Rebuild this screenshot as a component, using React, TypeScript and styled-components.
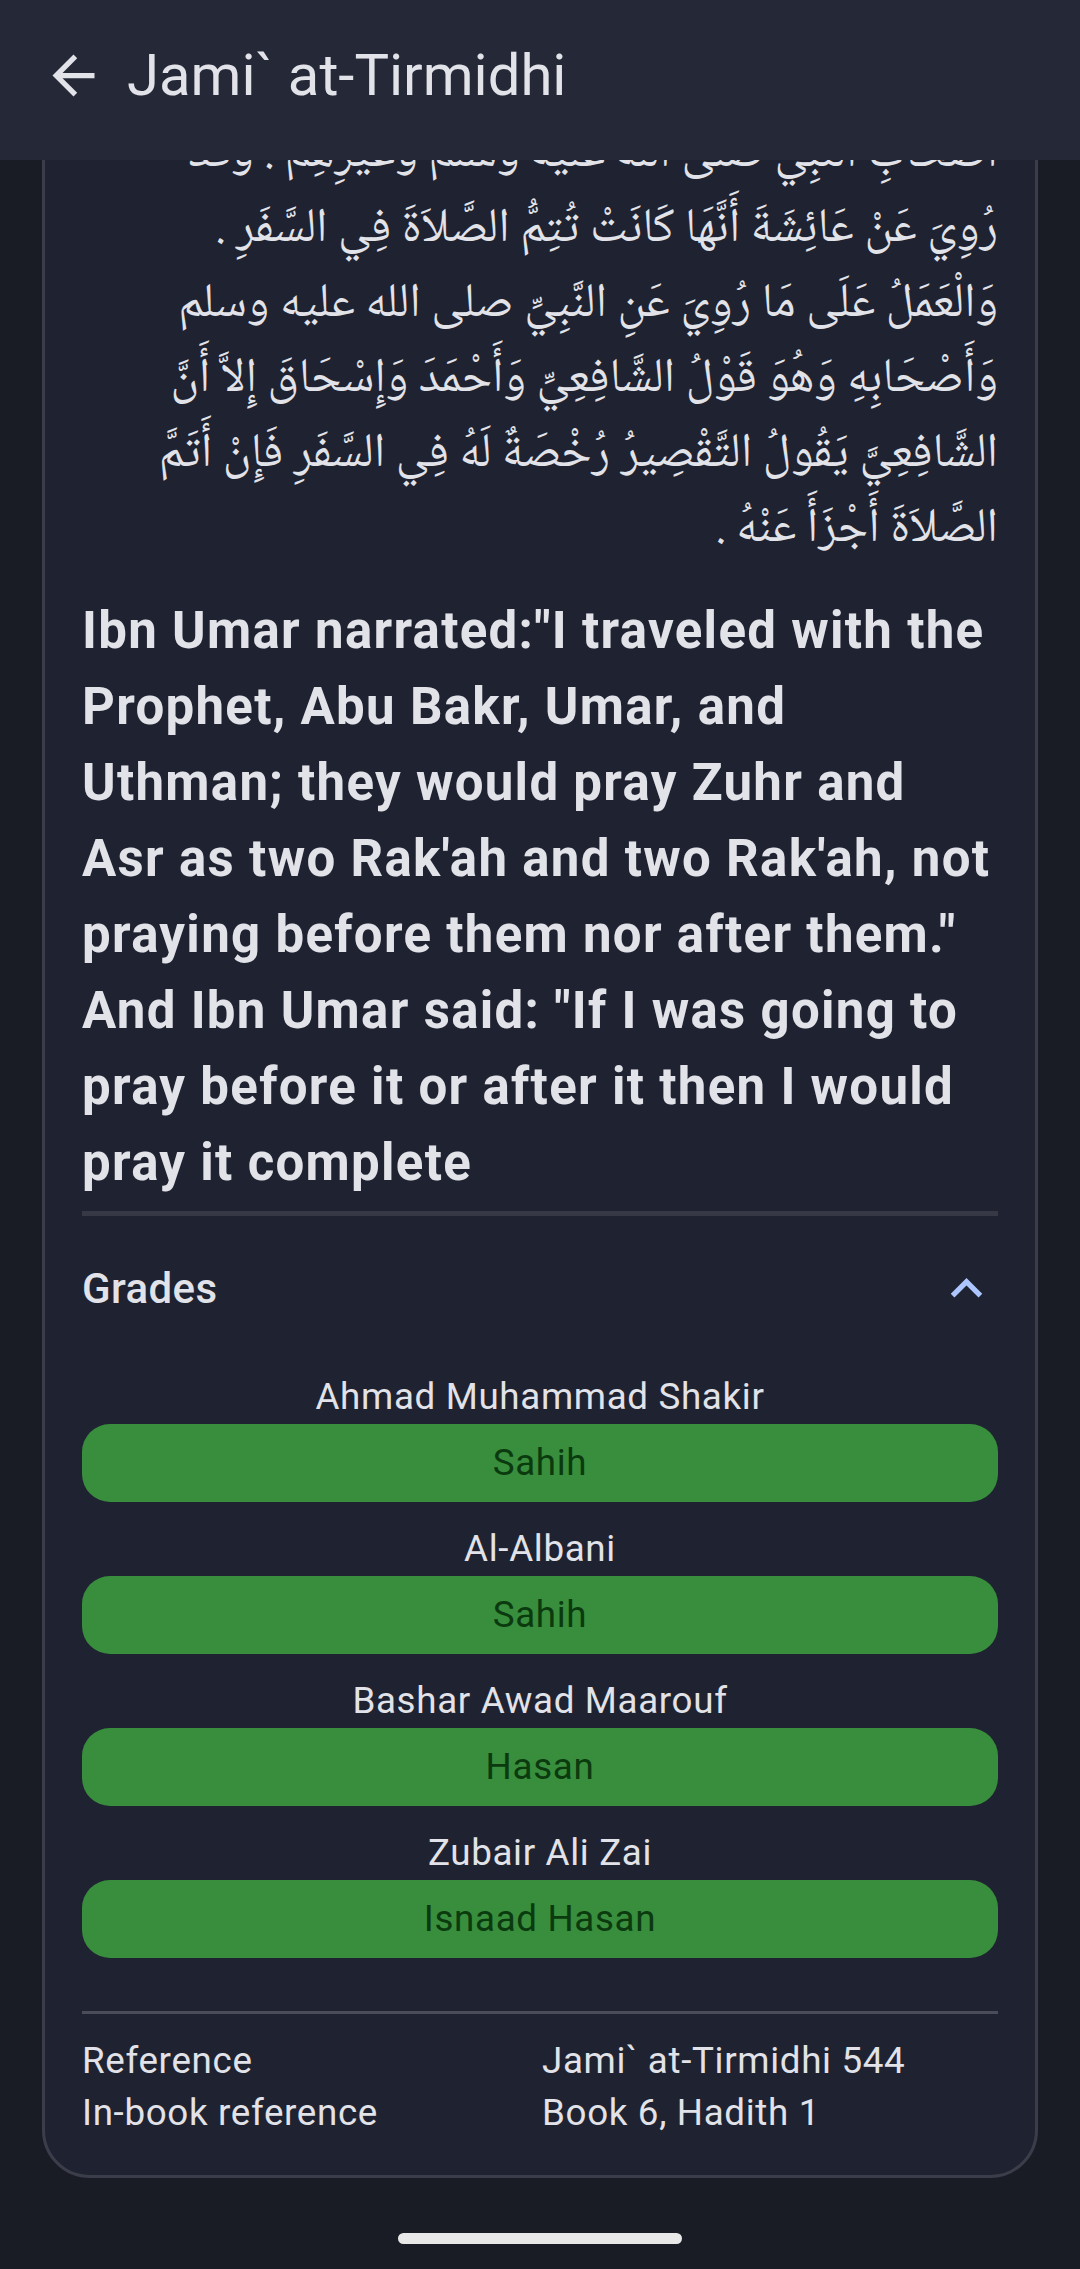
import React from "react";
import styled, { createGlobalStyle } from "styled-components";

const GlobalStyle = createGlobalStyle`
  html, body {
    margin: 0;
    padding: 0;
    background: #1a1c25;
  }
  body {
    font-family: Roboto, "Noto Sans", "DejaVu Sans", sans-serif;
    color: #e2e2e9;
    -webkit-font-smoothing: antialiased;
  }
  * { box-sizing: border-box; }
`;

const Screen = styled.div`
  position: relative;
  width: 1080px;
  height: 2269px;
  overflow: hidden;
  display: flex;
  flex-direction: column;
  background: #1a1c25;
`;

const TopBar = styled.header`
  position: absolute;
  top: 0;
  left: 0;
  right: 0;
  height: 160px;
  z-index: 5;
  display: flex;
  align-items: center;
  padding: 0 0 10px 10px;
  background: #252837;
`;

const IconButton = styled.button`
  width: 126px;
  height: 126px;
  display: flex;
  align-items: center;
  justify-content: center;
  background: none;
  border: none;
  padding: 0;
  margin-right: -9px;
  color: #e2e2e9;
`;

const Title = styled.h1`
  margin: 0;
  font-family: Roboto, sans-serif;
  font-weight: 400;
  font-size: 58px;
  line-height: 76px;
  color: #e2e2e9;
  letter-spacing: 0;
`;

const Card = styled.article`
  margin: 0 42px;
  padding: 115px 37px 35px;
  background: #1f2230;
  border: 3px solid #3b3e4a;
  border-radius: 0 0 48px 48px;
  display: flex;
  flex-direction: column;
`;

const ArabicText = styled.p`
  margin: 0;
  direction: rtl;
  text-align: right;
  font-family: "Noto Naskh Arabic", "Noto Sans Arabic", "DejaVu Sans", serif;
  font-size: 48px;
  line-height: 75px;
  color: #e2e2e9;
  white-space: nowrap;
`;

const EnglishText = styled.p`
  margin: 25px 0 0;
  font-family: Roboto, sans-serif;
  font-weight: 700;
  font-size: 51px;
  line-height: 76px;
  letter-spacing: 1.3px;
  color: #e2e2e9;
  white-space: nowrap;
`;

const Divider = styled.hr<{ $thick?: boolean; $gap: number }>`
  margin: ${(p) => p.$gap}px 0 0;
  border: none;
  height: ${(p) => (p.$thick ? 5 : 3)}px;
  background: ${(p) => (p.$thick ? "#363945" : "#4a4d59")};
`;

const GradesHeader = styled.div`
  height: 144px;
  display: flex;
  align-items: center;
  justify-content: space-between;
`;

const GradesTitle = styled.span`
  font-family: Roboto, sans-serif;
  font-weight: 500;
  font-size: 42px;
  letter-spacing: 0.4px;
  color: #e2e2e9;
`;

const Chevron = styled.svg`
  width: 63px;
  height: 63px;
  display: block;
`;

const GradeList = styled.div`
  display: flex;
  flex-direction: column;
  gap: 21.5px;
  margin-top: 11px;
`;

const GradeItem = styled.div`
  display: flex;
  flex-direction: column;
`;

const Grader = styled.div`
  text-align: center;
  font-size: 36.75px;
  line-height: 52.5px;
  letter-spacing: 0.66px;
  color: #e2e2e9;
`;

const Badge = styled.div`
  height: 78px;
  border-radius: 28px;
  background: #388e3c;
  display: flex;
  align-items: center;
  justify-content: center;
  font-size: 36.75px;
  letter-spacing: 0.66px;
  color: #0b3a0f;
`;

const RefTable = styled.div`
  margin-top: 21px;
  display: grid;
  grid-template-columns: 1fr 1fr;
  font-size: 36.75px;
  line-height: 52.5px;
  letter-spacing: 0.66px;
  color: #e2e2e9;
`;

const RefCell = styled.div<{ $value?: boolean }>`
  padding-left: ${(p) => (p.$value ? 2 : 0)}px;
`;

const NavArea = styled.div`
  flex: 1;
  display: flex;
  justify-content: center;
  padding-top: 55px;
`;

const Handle = styled.div`
  width: 284px;
  height: 11px;
  border-radius: 6px;
  background: #e8e8e8;
`;

const arabicLines = [
  "أَصْحَابِ النَّبِيِّ صلى الله عليه وسلم وَغَيْرِهِمْ . وَقَدْ",
  "رُوِيَ عَنْ عَائِشَةَ أَنَّهَا كَانَتْ تُتِمُّ الصَّلاَةَ فِي السَّفَرِ .",
  "وَالْعَمَلُ عَلَى مَا رُوِيَ عَنِ النَّبِيِّ صلى الله عليه وسلم",
  "وَأَصْحَابِهِ وَهُوَ قَوْلُ الشَّافِعِيِّ وَأَحْمَدَ وَإِسْحَاقَ إِلاَّ أَنَّ",
  "الشَّافِعِيَّ يَقُولُ التَّقْصِيرُ رُخْصَةٌ لَهُ فِي السَّفَرِ فَإِنْ أَتَمَّ",
  "الصَّلاَةَ أَجْزَأَ عَنْهُ .",
];

const englishLines = [
  'Ibn Umar narrated:"I traveled with the',
  "Prophet, Abu Bakr, Umar, and",
  "Uthman; they would pray Zuhr and",
  "Asr as two Rak'ah and two Rak'ah, not",
  'praying before them nor after them."',
  'And Ibn Umar said: "If I was going to',
  "pray before it or after it then I would",
  "pray it complete",
];

const grades = [
  { by: "Ahmad Muhammad Shakir", grade: "Sahih" },
  { by: "Al-Albani", grade: "Sahih" },
  { by: "Bashar Awad Maarouf", grade: "Hasan" },
  { by: "Zubair Ali Zai", grade: "Isnaad Hasan" },
];

function withBreaks(lines: string[]) {
  return lines.map((l, i) => (
    <React.Fragment key={i}>
      {l}
      {i < lines.length - 1 && <br />}
    </React.Fragment>
  ));
}

export default function App() {
  return (
    <>
      <GlobalStyle />
      <Screen>
        <TopBar>
          <IconButton aria-label="Back">
            <svg width="63" height="63" viewBox="0 0 24 24" fill="currentColor">
              <path d="M20 11H7.83l5.59-5.59L12 4l-8 8 8 8 1.41-1.41L7.83 13H20v-2z" />
            </svg>
          </IconButton>
          <Title>Jami` at-Tirmidhi</Title>
        </TopBar>

        <Card>
          <ArabicText>{withBreaks(arabicLines)}</ArabicText>

          <EnglishText>{withBreaks(englishLines)}</EnglishText>

          <Divider $thick $gap={10} />

          <GradesHeader>
            <GradesTitle>Grades</GradesTitle>
            <Chevron viewBox="0 0 24 24" fill="#adc6ff">
              <path d="M12 8l-6 6 1.41 1.41L12 10.83l4.59 4.58L18 14z" />
            </Chevron>
          </GradesHeader>

          <GradeList>
            {grades.map((g) => (
              <GradeItem key={g.by}>
                <Grader>{g.by}</Grader>
                <Badge>{g.grade}</Badge>
              </GradeItem>
            ))}
          </GradeList>

          <Divider $gap={53} />

          <RefTable>
            <RefCell>Reference</RefCell>
            <RefCell $value>Jami` at-Tirmidhi 544</RefCell>
            <RefCell>In-book reference</RefCell>
            <RefCell $value>Book 6, Hadith 1</RefCell>
          </RefTable>
        </Card>

        <NavArea>
          <Handle />
        </NavArea>
      </Screen>
    </>
  );
}
